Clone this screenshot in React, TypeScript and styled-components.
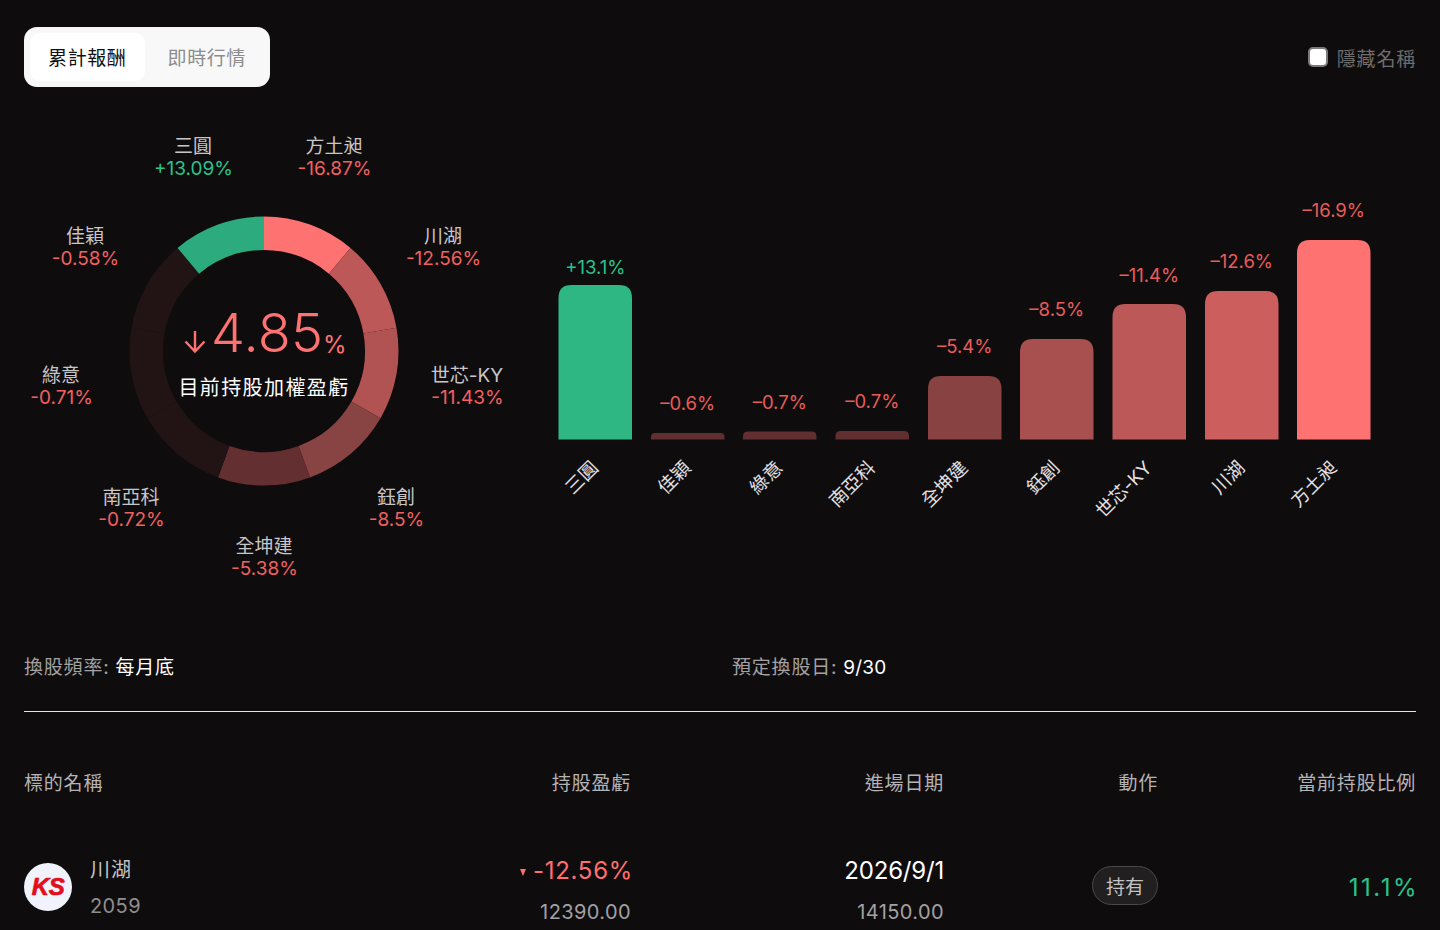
import React from 'react';
import styled, { createGlobalStyle } from 'styled-components';

const GlobalStyle = createGlobalStyle`
  html, body { margin: 0; padding: 0; background: #0f0c0e; height: 930px; overflow: hidden; }
  body { font-family: Inter, "Noto Sans CJK TC", sans-serif; color: #fff; }
  svg text { font-family: Inter, "Noto Sans CJK TC", sans-serif; }
`;

const Page = styled.main`
  width: 1440px;
  box-sizing: border-box;
  padding: 27px 24px 0;
`;
const TopBar = styled.div`
  display: flex;
  justify-content: space-between;
  align-items: center;
  height: 60px;
`;
const Tabs = styled.div`
  display: flex;
  box-sizing: border-box;
  width: 246px;
  height: 60px;
  padding: 6px;
  background: #f8f8f8;
  border-radius: 13px;
`;
const Tab = styled.button<{ $active?: boolean }>`
  width: 116px;
  border: 0;
  padding: 0 0 1px;
  border-radius: 10px;
  background: ${p => (p.$active ? '#fff' : 'transparent')};
  color: ${p => (p.$active ? '#111' : '#8c8c8c')};
  font: 400 19px Inter, "Noto Sans CJK TC", sans-serif;
  letter-spacing: 0.6px;
  margin-right: ${p => (p.$active ? '5px' : '0')};
`;
const HideName = styled.label`
  display: flex;
  align-items: center;
  gap: 9px;
  color: #6e6c6d;
  font-size: 19px;
  letter-spacing: 0.8px;
  margin-right: 0;
`;
const Check = styled.input`
  appearance: none;
  width: 20px;
  height: 20px;
  margin: 0;
  box-sizing: border-box;
  background: #fff;
  border: 2px solid #7a7a7a;
  border-radius: 5px;
`;
const Charts = styled.section`
  display: flex;
  height: 480px;
  margin-top: 33px;
`;
const ChartSvg = styled.svg`
  display: block;
  flex: none;
`;
const InfoRow = styled.div`
  display: grid;
  grid-template-columns: 708px 1fr;
  margin-top: 55px;
  padding-bottom: 30px;
  border-bottom: 1px solid #e6e6e6;
  font-size: 19px;
  line-height: 26px;
  letter-spacing: 0.8px;
`;
const InfoLabel = styled.span`
  color: #a3a1a2;
`;
const InfoValue = styled.span<{ $latin?: boolean }>`
  color: #fff;
  margin-left: 6px;
  letter-spacing: ${p => (p.$latin ? '0.2px' : '0.8px')};
`;
const TableGrid = styled.div`
  display: grid;
  grid-template-columns: 300px 307px 313px 214px 258px;
`;
const TableHead = styled(TableGrid)`
  margin-top: 59px;
  color: #b5b3b4;
  font-size: 19px;
  line-height: 26px;
  letter-spacing: 0.8px;
`;
const HeadCell = styled.div<{ $left?: boolean }>`
  text-align: ${p => (p.$left ? 'left' : 'right')};
`;
const TableRow = styled(TableGrid)`
  margin-top: 54px;
  align-items: center;
`;
const NameCell = styled.div`
  display: flex;
  align-items: center;
  gap: 18px;
`;
const Logo = styled.div`
  width: 48px;
  height: 48px;
  margin-top: -2px;
  border-radius: 50%;
  background: #f1f3fc;
  color: #e30d1c;
  display: flex;
  align-items: center;
  justify-content: center;
  font: italic 700 24px "Liberation Sans", sans-serif;
  letter-spacing: -0.5px;
  -webkit-text-stroke: 0.7px #e30d1c;
`;
const NameStack = styled.div`
  display: flex;
  flex-direction: column;
  gap: 10px;
`;
const ValueStack = styled.div`
  display: flex;
  flex-direction: column;
  gap: 15px;
  align-items: flex-end;
  margin-top: 7px;
`;
const Name = styled.div`
  color: #c4c2c3;
  font-size: 20px;
  line-height: 26px;
  letter-spacing: 1px;
`;
const Code = styled.div`
  color: #8f8d8e;
  font-size: 20px;
  line-height: 26px;
  letter-spacing: 0.4px;
`;
const Primary = styled.div<{ $tone: 'red' | 'white' }>`
  display: flex;
  align-items: center;
  gap: 7px;
  color: ${p => (p.$tone === 'red' ? '#ff6f6f' : '#fff')};
  font-size: 24px;
  line-height: 26px;
  letter-spacing: ${p => (p.$tone === 'red' ? '0.7px' : '-0.2px')};
  margin-right: ${p => (p.$tone === 'red' ? '-2px' : '0')};
`;
const Secondary = styled.div`
  color: #a3a1a2;
  font-size: 20px;
  line-height: 26px;
  letter-spacing: 0.4px;
`;
const DownMark = styled.span`
  width: 0;
  height: 0;
  margin-top: 3px;
  border-left: 3px solid transparent;
  border-right: 3px solid transparent;
  border-top: 7px solid #ff6f6f;
`;
const ActionCell = styled.div`
  display: flex;
  justify-content: flex-end;
  margin-bottom: 5px;
`;
const Pill = styled.div`
  box-sizing: border-box;
  width: 66px;
  height: 39px;
  border: 1px solid #4a4849;
  border-radius: 20px;
  background: #211f20;
  color: #c4c2c3;
  font-size: 19px;
  display: flex;
  align-items: center;
  justify-content: center;
`;
const Ratio = styled.div`
  text-align: right;
  color: #28c48b;
  font-size: 24px;
  letter-spacing: 2.5px;
  margin-right: -3px;
  margin-bottom: 2px;
`;

const CX = 264, CY = 351, RO = 134.5, RI = 101;
const segColors = ['#ff7272', '#bc5858', '#b25353', '#884343', '#642f30', '#221415', '#221415', '#221415', '#2bab7e'];

function pt(r: number, deg: number) {
  const a = (deg * Math.PI) / 180;
  return `${(CX + r * Math.sin(a)).toFixed(2)} ${(CY - r * Math.cos(a)).toFixed(2)}`;
}
function arc(i: number) {
  const s = i * 40, e = (i + 1) * 40;
  return `M${pt(RO, s)}A${RO} ${RO} 0 0 1 ${pt(RO, e)}L${pt(RI, e)}A${RI} ${RI} 0 0 0 ${pt(RI, s)}Z`;
}

const donutLabels = [
  { n: '三圓', v: '+13.09%', x: 193, y: 145, up: true },
  { n: '方土昶', v: '-16.87%', x: 334, y: 145 },
  { n: '川湖', v: '-12.56%', x: 443, y: 235 },
  { n: '佳穎', v: '-0.58%', x: 85, y: 235 },
  { n: '世芯-KY', v: '-11.43%', x: 467, y: 374 },
  { n: '綠意', v: '-0.71%', x: 61, y: 374 },
  { n: '鈺創', v: '-8.5%', x: 396, y: 496 },
  { n: '南亞科', v: '-0.72%', x: 131, y: 496 },
  { n: '全坤建', v: '-5.38%', x: 264, y: 545 },
];

const bars = [
  { n: '三圓', v: '+13.1%', x: 558.5, top: 285, c: '#2fb783', t: '#28c48b', off: 11 },
  { n: '佳穎', v: '–0.6%', x: 651, top: 433, c: '#622f30', off: 23 },
  { n: '綠意', v: '–0.7%', x: 743, top: 431.5, c: '#622f30', off: 23 },
  { n: '南亞科', v: '–0.7%', x: 835.5, top: 431, c: '#622f30', off: 23 },
  { n: '全坤建', v: '–5.4%', x: 928, top: 376, c: '#884242', off: 23 },
  { n: '鈺創', v: '–8.5%', x: 1020, top: 339, c: '#a85050', off: 23 },
  { n: '世芯-KY', v: '–11.4%', x: 1112.5, top: 304, c: '#bc5858', off: 22 },
  { n: '川湖', v: '–12.6%', x: 1205, top: 291, c: '#cc5f5d', off: 23 },
  { n: '方土昶', v: '–16.9%', x: 1297, top: 240, c: '#ff7272', off: 23 },
];
const BASE = 439.5, BW = 73.5;

function barPath(x: number, top: number) {
  const h = BASE - top;
  const r = Math.min(13, h * 0.6);
  return `M${x} ${BASE}V${top + r}Q${x} ${top} ${x + r} ${top}H${x + BW - r}Q${x + BW} ${top} ${x + BW} ${top + r}V${BASE}Z`;
}

export default function App() {
  return (
    <Page>
      <GlobalStyle />
      <TopBar>
        <Tabs>
          <Tab $active>累計報酬</Tab>
          <Tab>即時行情</Tab>
        </Tabs>
        <HideName>
          <Check type="checkbox" />
          隱藏名稱
        </HideName>
      </TopBar>
      <Charts>
        <ChartSvg width={506} height={480} viewBox="24 120 506 480">
          {segColors.map((c, i) => (
            <path key={i} d={arc(i)} fill={c} />
          ))}
          {donutLabels.map(l => (
            <g key={l.n} textAnchor="middle" fontSize="19">
              <text x={l.x} y={l.y + 7.5} fill="#c8c6c7">{l.n}</text>
              <text x={l.x + 0.5} y={l.y + 29.5} fill={l.up ? '#28c48b' : '#f2605f'}>{l.v}</text>
            </g>
          ))}
          <path d="M195 331V351M185.5 341.5L195 351.5L204.5 341.5" fill="none" stroke="#ff7272" strokeWidth="2.4" />
          <text x={211} y={352} fontSize="54" fontWeight="300" fill="#ff7272" letterSpacing="0.3">4.85</text>
          <text x={323} y={353} fontSize="24" fill="#ff7272">%</text>
          <text x={264} y={395} fontSize="20" fill="#fff" textAnchor="middle" letterSpacing="1.4">目前持股加權盈虧</text>
        </ChartSvg>
        <ChartSvg width={886} height={480} viewBox="530 120 886 480">
          {bars.map(b => (
            <g key={b.n}>
              <path d={barPath(b.x, b.top)} fill={b.c} />
              <text x={b.x + BW / 2} y={b.top - b.off} fontSize="18.5" textAnchor="middle" fill={b.t ?? '#e85c5a'}>{b.v}</text>
              <text
                transform={`translate(${b.x + BW / 2 + 4} 469) rotate(-45)`}
                fontSize="18.5"
                textAnchor="end"
                fill="#e2e0e1"
              >
                {b.n}
              </text>
            </g>
          ))}
        </ChartSvg>
      </Charts>
      <InfoRow>
        <div><InfoLabel>換股頻率:</InfoLabel><InfoValue>每月底</InfoValue></div>
        <div><InfoLabel>預定換股日:</InfoLabel><InfoValue $latin>9/30</InfoValue></div>
      </InfoRow>
      <TableHead>
        <HeadCell $left>標的名稱</HeadCell>
        <HeadCell>持股盈虧</HeadCell>
        <HeadCell>進場日期</HeadCell>
        <HeadCell>動作</HeadCell>
        <HeadCell>當前持股比例</HeadCell>
      </TableHead>
      <TableRow>
        <NameCell>
          <Logo>KS</Logo>
          <NameStack>
            <Name>川湖</Name>
            <Code>2059</Code>
          </NameStack>
        </NameCell>
        <ValueStack>
          <Primary $tone="red"><DownMark />-12.56%</Primary>
          <Secondary>12390.00</Secondary>
        </ValueStack>
        <ValueStack>
          <Primary $tone="white">2026/9/1</Primary>
          <Secondary>14150.00</Secondary>
        </ValueStack>
        <ActionCell><Pill>持有</Pill></ActionCell>
        <Ratio>11.1%</Ratio>
      </TableRow>
    </Page>
  );
}
